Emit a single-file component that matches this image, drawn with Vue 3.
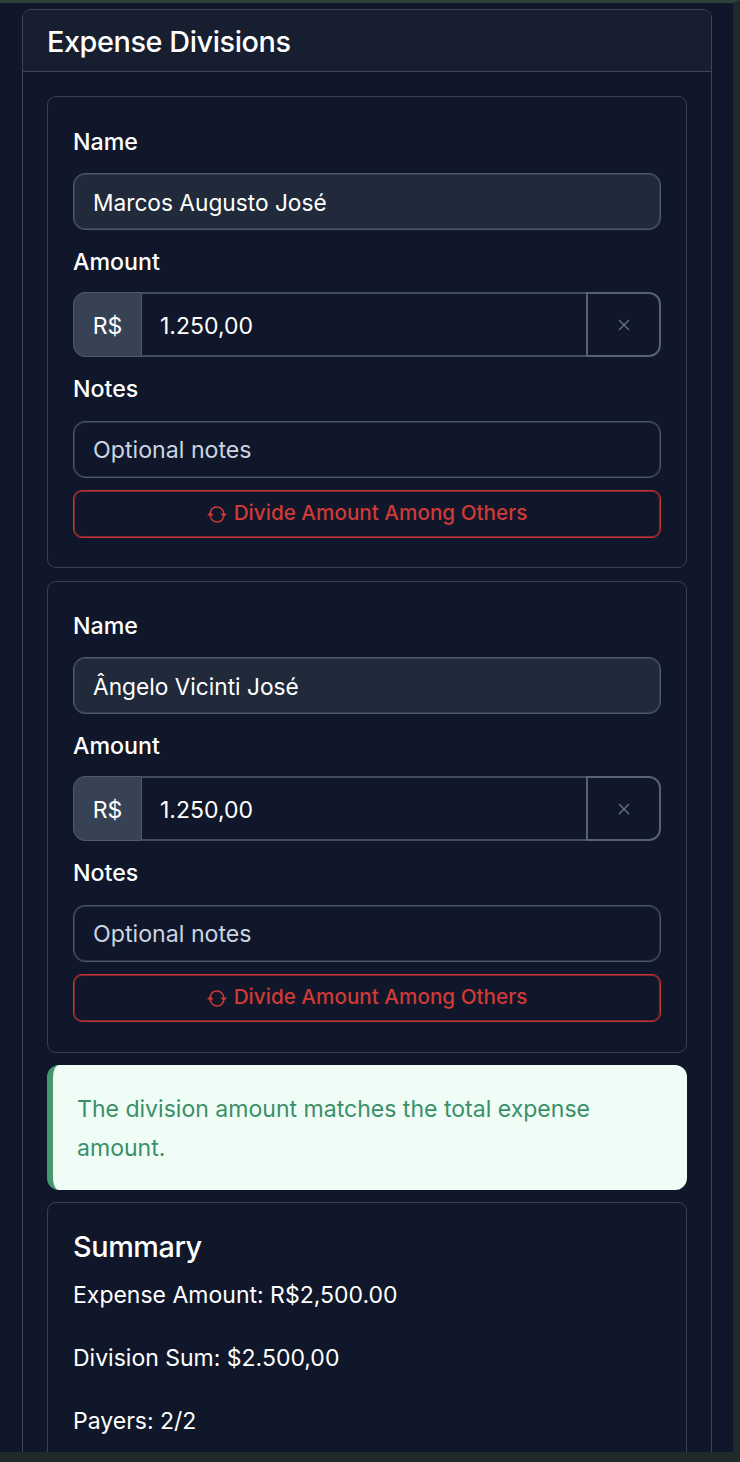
<template>
  <div class="frame">
    <div class="page">
      <section class="card">
        <h2 class="card-header">Expense Divisions</h2>
        <div class="card-body">
          <div v-for="d in divisions" :key="d.name" class="division">
            <label class="label">Name</label>
            <div class="input filled">{{ d.name }}</div>
            <label class="label">Amount</label>
            <div class="input-group">
              <span class="prefix">R$</span>
              <div class="amount">{{ d.amount }}</div>
              <button class="remove">
                <svg width="12" height="12" viewBox="0 0 12 12" fill="none" stroke="currentColor" stroke-width="1.3">
                  <path d="M1 1l10 10M11 1L1 11" />
                </svg>
              </button>
            </div>
            <label class="label">Notes</label>
            <div class="input notes">Optional notes</div>
            <button class="divide">
              <svg class="sync" width="20" height="17" viewBox="0 0 20 17" fill="none" stroke="currentColor" stroke-width="1.5">
                <path d="M3.3 6.6C4 3.2 6.8 1 10 1c3.6 0 6.7 2.8 6.8 7" />
                <path d="M16.7 10.4C16 13.8 13.2 16 10 16c-3.6 0-6.7-2.8-6.8-7" />
                <path d="M13.4 7.6h6.6L16.7 11.2z" fill="currentColor" stroke="none" />
                <path d="M0 9.4h6.6L3.3 5.8z" fill="currentColor" stroke="none" />
              </svg>
              Divide Amount Among Others
            </button>
          </div>

          <div class="alert">The division amount matches the total expense amount.</div>

          <div class="summary">
            <h3 class="summary-title">Summary</h3>
            <p>Expense Amount: R$2,500.00</p>
            <p>Division Sum: $2.500,00</p>
            <p>Payers: 2/2</p>
          </div>
        </div>
      </section>
    </div>
  </div>
</template>

<script setup>
const divisions = [
  { name: 'Marcos Augusto José', amount: '1.250,00' },
  { name: 'Ângelo Vicinti José', amount: '1.250,00' }
]
</script>

<style>
html, body {
  margin: 0;
  background: #1f2a2a;
}
</style>

<style scoped>
.frame {
  box-sizing: border-box;
  width: 740px;
  height: 1462px;
  border-top: 3px solid #2f3f3c;
  border-right: 7px solid #1f2a2a;
  border-bottom: 10px solid #1f2a2a;
  overflow: hidden;
  font-family: Inter, "Noto Sans", sans-serif;
  color: #fff;
}

.page {
  height: 100%;
  background: #10172a;
  padding: 6px 21px 0 22px;
  box-sizing: border-box;
}

/* Outer card */
.card {
  border: 1px solid #3d4558;
  border-radius: 9px;
  background: #10172a;
}

.card-header {
  margin: 0;
  height: 62px;
  box-sizing: border-box;
  padding: 2px 24px 0;
  line-height: 60px;
  font-size: 28.8px;
  font-weight: 500;
  letter-spacing: -0.4px;
  background: #171e30;
  border-bottom: 1px solid #3d4558;
  border-radius: 8px 8px 0 0;
}

.card-body {
  padding: 24px;
  display: flex;
  flex-direction: column;
  gap: 12px;
}

/* One division */
.division {
  border: 1px solid #383f52;
  border-radius: 9px;
  padding: 25px;
  height: 472px;
  box-sizing: border-box;
}

.division + .division {
  margin-top: 1px;
  padding-top: 24px;
}

.label {
  display: block;
  font-size: 23.2px;
  font-weight: 500;
  line-height: 40px;
  height: 40px;
}

/* 1px border plus a faint inset ring, the reference borders sit between pixels */
.input {
  box-sizing: border-box;
  height: 57px;
  margin: 11px 0 12px;
  padding: 2px 19px 0;
  line-height: 54px;
  font-size: 22.7px;
  border: 1px solid #4f5a6d;
  box-shadow: inset 0 0 0 1px rgba(79, 90, 109, 0.45);
  border-radius: 12px;
}

.input.filled {
  background: #202a3a;
}

.input.notes {
  color: #cbd5e1;
  margin-top: 12px;
  padding-top: 1px;
  font-size: 23.2px;
}

.input-group {
  display: flex;
  height: 65px;
  margin: 10px 0 12px;
  font-size: 23px;
}

.prefix {
  width: 69px;
  box-sizing: border-box;
  padding-top: 2px;
  background: #374354;
  border: 1px solid #4f5a6d;
  border-radius: 12px 0 0 12px;
  display: flex;
  align-items: center;
  justify-content: center;
}

.amount {
  flex: 1;
  padding: 2px 0 0 18px;
  display: flex;
  align-items: center;
  border-top: 2px solid #414c60;
  border-bottom: 2px solid #414c60;
}

.remove {
  width: 75px;
  background: none;
  border: 2px solid #566174;
  border-radius: 0 12px 12px 0;
  color: #64748b;
  padding: 0;
  display: flex;
  align-items: center;
  justify-content: center;
}

.divide {
  width: 100%;
  height: 48px;
  box-sizing: border-box;
  padding: 0 0 3px;
  background: none;
  border: 1px solid #c9332f;
  box-shadow: inset 0 0 0 1px rgba(201, 51, 47, 0.6);
  border-radius: 9px;
  color: #cf3a36;
  font-family: inherit;
  font-size: 20.7px;
  font-weight: 500;
  display: flex;
  align-items: center;
  justify-content: center;
  gap: 7px;
}

.sync {
  margin-top: 3px;
}

/* Alert */
.alert {
  box-sizing: border-box;
  height: 125px;
  background: #f0fdf6;
  color: #3a8f68;
  border-left: 6px solid #48966e;
  border-radius: 12px;
  padding: 25px 24px 0;
  font-size: 23.05px;
  line-height: 39px;
}

/* Summary */
.summary {
  border: 1px solid #383f52;
  border-radius: 9px;
  padding: 25px;
  height: 400px;
  box-sizing: border-box;
}

.summary-title {
  margin: 0 0 10px;
  font-size: 28.8px;
  font-weight: 500;
  line-height: 38px;
  letter-spacing: -0.4px;
}

.summary p {
  margin: 0 0 24px;
  font-size: 23px;
  line-height: 39px;
}
</style>
